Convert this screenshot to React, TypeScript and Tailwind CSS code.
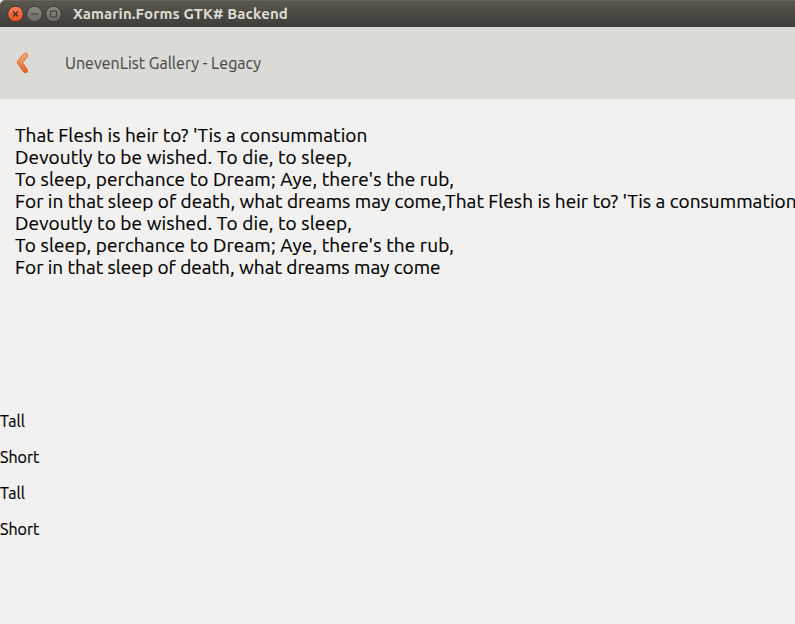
const passage: { text: string; tracking: string; tail?: string }[] = [
  { text: "That Flesh is heir to? 'Tis a consummation", tracking: 'tracking-[0.06px]' },
  { text: 'Devoutly to be wished. To die, to sleep,', tracking: 'tracking-[0.12px]' },
  { text: "To sleep, perchance to Dream; Aye, there's the rub,", tracking: 'tracking-[0.13px]' },
  {
    text: 'For in that sleep of death, what dreams may come,',
    tracking: 'tracking-[0.04px]',
    tail: "That Flesh is heir to? 'Tis a consummation",
  },
  { text: 'Devoutly to be wished. To die, to sleep,', tracking: 'tracking-[0.12px]' },
  { text: "To sleep, perchance to Dream; Aye, there's the rub,", tracking: 'tracking-[0.13px]' },
  { text: 'For in that sleep of death, what dreams may come', tracking: 'tracking-[0.02px]' },
];

const rows = ['Tall', 'Short', 'Tall', 'Short'];

function WindowButtons() {
  return (
    <svg width="66" height="27" viewBox="0 0 66 27" className="shrink-0">
      <defs>
        <linearGradient id="close" x1="0" y1="0" x2="0" y2="1">
          <stop offset="0" stopColor="#f9815b" />
          <stop offset="1" stopColor="#e5501f" />
        </linearGradient>
        <linearGradient id="plain" x1="0" y1="0" x2="0" y2="1">
          <stop offset="0" stopColor="#8b8981" />
          <stop offset="1" stopColor="#6b6962" />
        </linearGradient>
      </defs>
      <circle cx="15.5" cy="13" r="7.8" fill="url(#close)" stroke="#3a3833" />
      <circle cx="34.5" cy="13" r="7.8" fill="url(#plain)" stroke="#3a3833" />
      <circle cx="53.5" cy="13" r="7.8" fill="url(#plain)" stroke="#3a3833" />
      <path d="M13 10.5l5 5M18 10.5l-5 5" stroke="#3c3028" strokeWidth="1.3" />
      <path d="M31 13h7M50.5 10h6v6h-6z" fill="none" stroke="#3c3b37" />
    </svg>
  );
}

function BackArrow() {
  return (
    <svg width="14" height="22" viewBox="0 0 14 22" className="shrink-0">
      <defs>
        <linearGradient id="arrow" x1="0" y1="0" x2="0" y2="1">
          <stop offset="0" stopColor="#f8b26d" />
          <stop offset="0.5" stopColor="#f08a4b" />
          <stop offset="1" stopColor="#ee5a22" />
        </linearGradient>
      </defs>
      <path
        d="M7.9 1.7 1.5 9.2Q0.9 10 1.5 10.9L7.3 19.6Q8 20.5 9 20.5H10.6Q11.9 20.2 11.5 18.1L6.5 10.5 11.5 4.4Q12 1.6 10.4 1.4H8.8Q8.3 1.4 7.9 1.7Z"
        fill="url(#arrow)"
        stroke="#c4622f"
        strokeWidth="0.9"
      />
    </svg>
  );
}

export default function App() {
  return (
    <div className="flex h-[624px] w-[795px] flex-col overflow-hidden bg-[#f2f1f0] font-['Ubuntu','Noto_Sans',sans-serif] text-black">
      <header className="flex h-[27px] shrink-0 items-center rounded-tl-[5px] border-t border-[#66645a] bg-linear-to-b from-[#5a574e] to-[#3e3d39]">
        <WindowButtons />
        <h1 className="ml-[7px] whitespace-nowrap text-[15px] font-bold leading-5 tracking-[0.13px] text-[#dfdbd2]">
          Xamarin.Forms GTK# Backend
        </h1>
      </header>
      <nav className="flex h-[72px] shrink-0 items-center bg-[#dbdad5] pl-4">
        <BackArrow />
        <span className="ml-[35px] whitespace-nowrap text-[16px] leading-5 tracking-[0.02px] text-[#4c4c4c] [-webkit-text-stroke:0.15px_#4c4c4c]">
          UnevenList Gallery - Legacy
        </span>
      </nav>
      <main className="flex flex-col [-webkit-text-stroke:0.2px_#000]">
        <div className="h-[304px] pl-[15px] pt-[25px]">
          {passage.map((line, i) => (
            <p key={i} className={`whitespace-nowrap text-[19px] leading-[22px] ${line.tracking}`}>
              {line.text}
              {line.tail && <span>{line.tail}</span>}
            </p>
          ))}
        </div>
        {rows.map((row, i) => (
          <div key={i} className="flex h-9 items-center text-[16px] leading-5">
            {row}
          </div>
        ))}
      </main>
    </div>
  );
}
